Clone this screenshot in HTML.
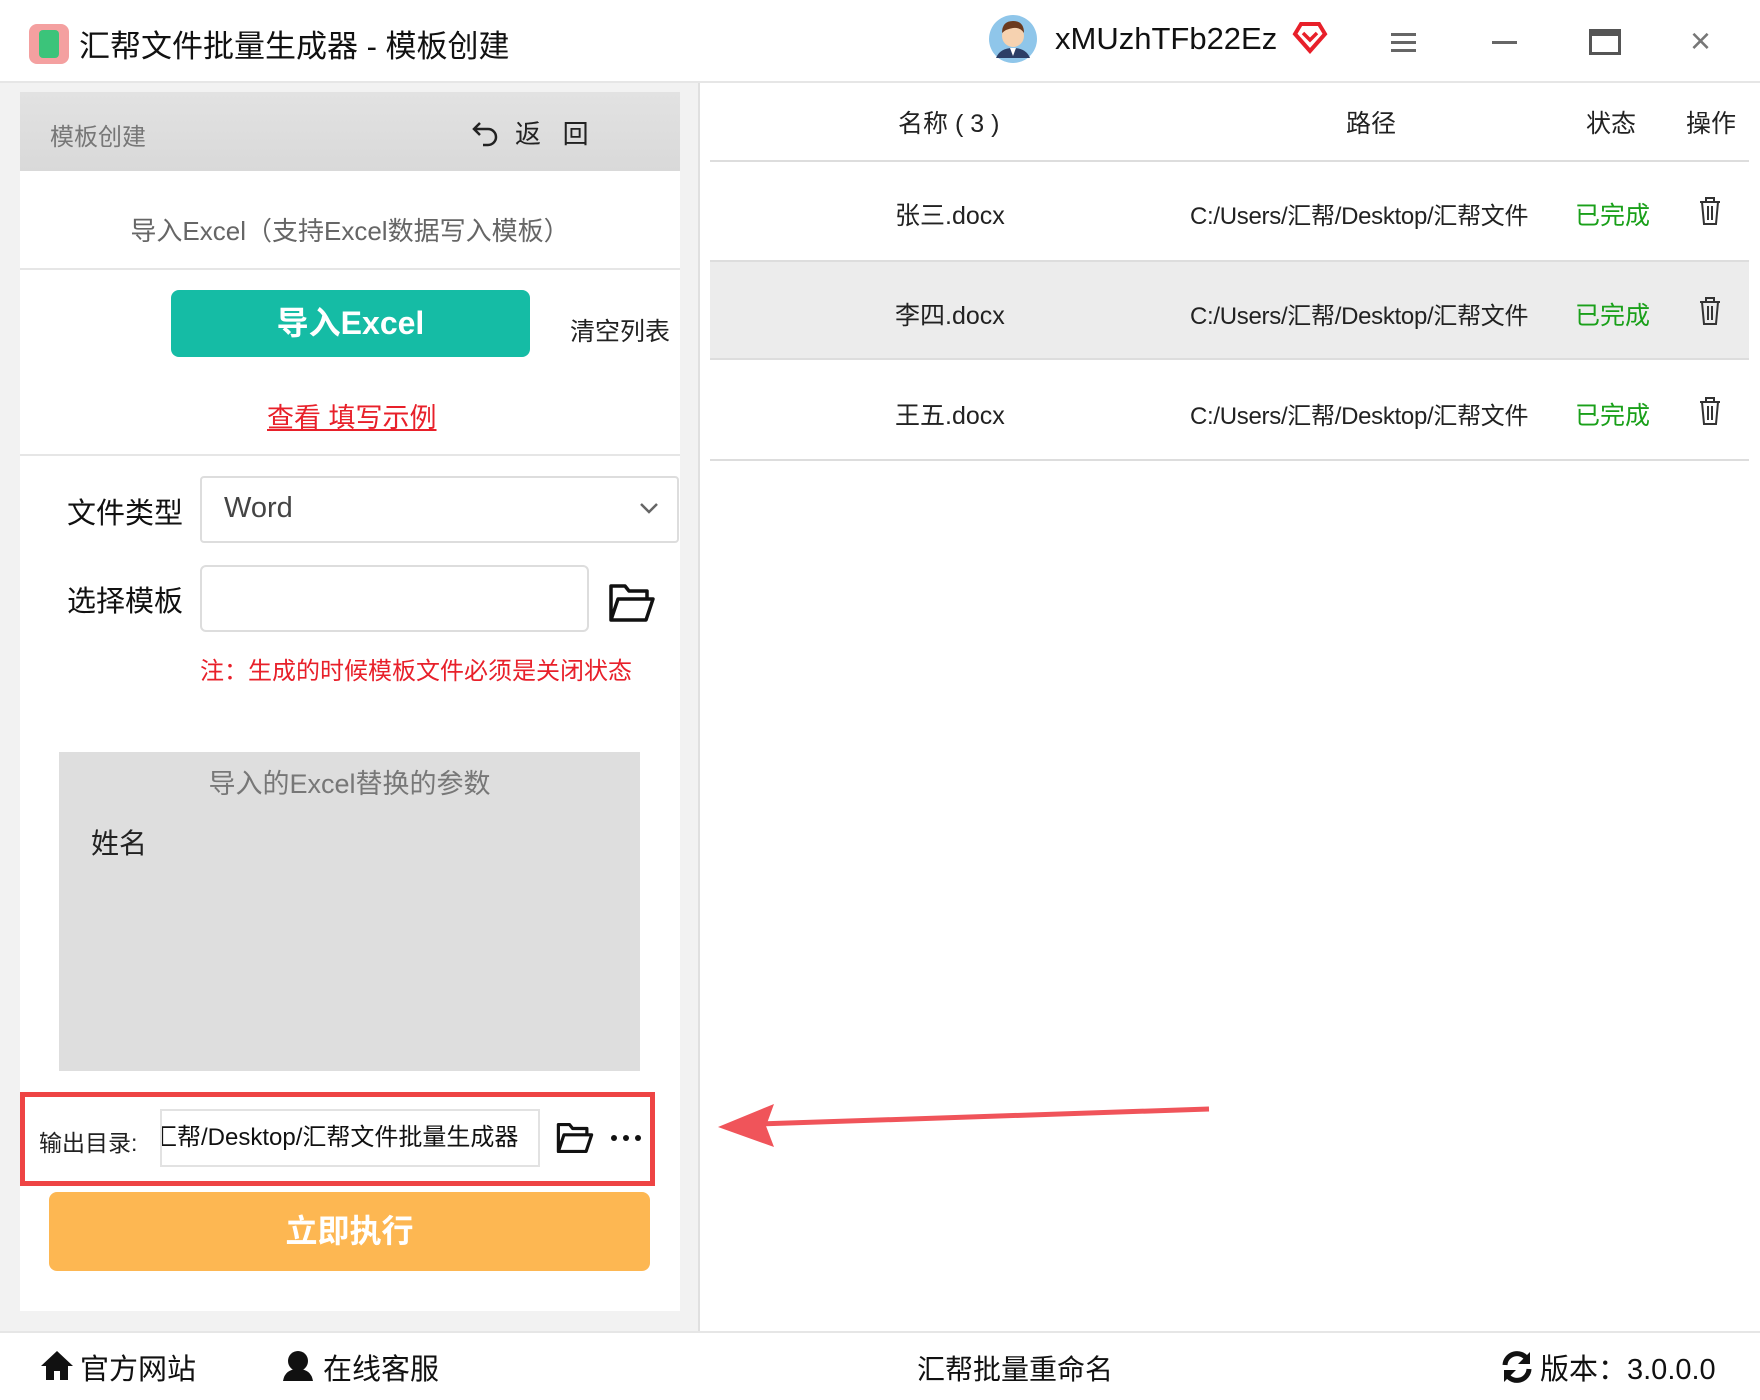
<!DOCTYPE html>
<html><head><meta charset="utf-8"><style>
*{margin:0;padding:0;box-sizing:border-box}
body{width:1760px;height:1400px;background:#fff;font-family:"Liberation Sans","Noto Sans CJK SC",sans-serif;position:relative;overflow:hidden;color:#222}
.a{position:absolute;white-space:nowrap}
</style></head><body>
<div class="a" style="left:29px;top:24px;width:40px;height:40px;background:#f4a0a0;border-radius:8px"></div>
<div class="a" style="left:39px;top:30px;width:20px;height:28px;background:#3bc47a;border-radius:4px"></div>
<div class="a" style="left:79px;top:21px;font-size:31px;color:#111">汇帮文件批量生成器 - 模板创建</div>
<svg class="a" style="left:988px;top:14px" width="50" height="50" viewBox="0 0 50 50"><circle cx="25" cy="25" r="24" fill="#8fc6ea"/><circle cx="25" cy="22" r="11" fill="#f6d2b0"/><path d="M14 19q0-12 11-12t11 12q-4-6-11-5t-11 5z" fill="#6b3a1e"/><path d="M8 44q4-10 17-10t17 10z" fill="#2c3e66"/><path d="M22 34l3 8 3-8z" fill="#fff"/></svg>
<div class="a" style="left:1055px;top:21px;font-size:31px;color:#111">xMUzhTFb22Ez</div>
<svg class="a" style="left:1292px;top:20px" width="36" height="34" viewBox="0 0 36 34"><path d="M18 31L3 14 9 4h18l6 10z" fill="none" stroke="#e8202a" stroke-width="4"/><path d="M11 13l7 7 7-7" fill="none" stroke="#e8202a" stroke-width="3.5"/></svg>
<div class="a" style="left:1391px;top:33px;width:25px;height:3px;background:#666;box-shadow:0 8px 0 #666,0 16px 0 #666"></div>
<div class="a" style="left:1492px;top:41px;width:25px;height:3px;background:#666"></div>
<div class="a" style="left:1589px;top:29px;width:32px;height:26px;border:3px solid #555;border-top-width:7px"></div>
<div class="a" style="left:1690px;top:20px;font-size:36px;color:#777">×</div>
<div class="a" style="left:0;top:81px;width:1760px;height:2px;background:#e6e6e6"></div>
<div class="a" style="left:0;top:83px;width:699px;height:1249px;background:#f2f2f2"></div>
<div class="a" style="left:698px;top:83px;width:2px;height:1249px;background:#e0e0e0"></div>
<div class="a" style="left:20px;top:92px;width:660px;height:1219px;background:#fff"></div>
<div class="a" style="left:20px;top:92px;width:660px;height:79px;background:linear-gradient(#e2e2e2,#d9d9d9)"></div>
<div class="a" style="left:50px;top:117px;font-size:24px;color:#777">模板创建</div>
<svg class="a" style="left:471px;top:119px" width="30" height="28" viewBox="0 0 30 28"><path d="M9 4L3 10l6 6M3 10h14a8 8 0 010 16h-5" fill="none" stroke="#222" stroke-width="2.5"/></svg>
<div class="a" style="left:515px;top:114px;font-size:26px;color:#222">返&nbsp;&nbsp;&nbsp;回</div>
<div class="a" style="left:20px;top:211px;width:660px;text-align:center;font-size:26px;color:#666">导入Excel（支持Excel数据写入模板）</div>
<div class="a" style="left:20px;top:268px;width:660px;height:2px;background:#e6e6e6"></div>
<div class="a" style="left:171px;top:290px;width:359px;height:67px;background:#15bca5;border-radius:8px;color:#fff;font-size:32px;font-weight:bold;text-align:center;line-height:67px">导入Excel</div>
<div class="a" style="left:570px;top:312px;font-size:25px;color:#222">清空列表</div>
<div class="a" style="left:267px;top:396px;font-size:27px;color:#e8202a;text-decoration:underline">查看 填写示例</div>
<div class="a" style="left:20px;top:454px;width:660px;height:2px;background:#e6e6e6"></div>
<div class="a" style="left:67px;top:490px;font-size:29px;color:#111">文件类型</div>
<div class="a" style="left:200px;top:476px;width:479px;height:67px;border:2px solid #ddd;border-radius:4px"></div>
<div class="a" style="left:224px;top:492px;font-size:29px;color:#444">Word</div>
<svg class="a" style="left:638px;top:500px" width="22" height="16"><path d="M3 4l8 8 8-8" fill="none" stroke="#666" stroke-width="2.5"/></svg>
<div class="a" style="left:67px;top:578px;font-size:29px;color:#111">选择模板</div>
<div class="a" style="left:200px;top:565px;width:389px;height:67px;border:2px solid #ddd;border-radius:6px"></div>
<svg class="a" style="left:608px;top:582px" width="48" height="42" viewBox="0 0 48 42"><path d="M3 38V4h14l4 5h18v8M3 38l7-21h35l-7 21z" fill="none" stroke="#111" stroke-width="3.5" stroke-linejoin="round"/></svg>
<div class="a" style="left:200px;top:651px;font-size:24px;color:#e8202a">注：生成的时候模板文件必须是关闭状态</div>
<div class="a" style="left:59px;top:752px;width:581px;height:319px;background:#dedede"></div>
<div class="a" style="left:59px;top:762px;width:581px;text-align:center;font-size:27px;color:#777">导入的Excel替换的参数</div>
<div class="a" style="left:91px;top:822px;font-size:28px;color:#222">姓名</div>
<div class="a" style="left:20px;top:1092px;width:635px;height:94px;border:5px solid #ee4444"></div>
<div class="a" style="left:39px;top:1124px;font-size:23px;color:#222">输出目录:</div>
<div class="a" style="left:160px;top:1109px;width:380px;height:58px;border:2px solid #e2e2e2;overflow:hidden"><div class="a" style="left:-9px;top:0;font-size:24px;line-height:54px;color:#111">汇帮/Desktop/汇帮文件批量生成器</div></div>
<svg class="a" style="left:556px;top:1121px" width="38" height="34" viewBox="0 0 48 42"><path d="M3 38V4h14l4 5h18v8M3 38l7-21h35l-7 21z" fill="none" stroke="#111" stroke-width="4" stroke-linejoin="round"/></svg>
<div class="a" style="left:611px;top:1135px;width:6px;height:6px;background:#111;border-radius:50%;box-shadow:12px 0 0 #111,24px 0 0 #111"></div>
<div class="a" style="left:49px;top:1192px;width:601px;height:79px;background:#fdb752;border-radius:8px;color:#fff;font-size:32px;font-weight:bold;text-align:center;line-height:79px">立即执行</div>
<div class="a" style="left:898px;top:104px;font-size:25px;color:#222">名称 ( 3 )</div>
<div class="a" style="left:1346px;top:104px;font-size:25px;color:#222">路径</div>
<div class="a" style="left:1586px;top:104px;font-size:25px;color:#222">状态</div>
<div class="a" style="left:1686px;top:104px;font-size:25px;color:#222">操作</div>
<div class="a" style="left:710px;top:160px;width:1039px;height:2px;background:#ddd"></div>
<div class="a" style="left:710px;top:260px;width:1039px;height:100px;background:#ececec;border-top:2px solid #ddd;border-bottom:2px solid #ddd"></div>
<div class="a" style="left:710px;top:459px;width:1039px;height:2px;background:#ddd"></div>
<div class="a" style="left:895px;top:196px;font-size:25px">张三.docx</div>
<div class="a" style="left:895px;top:296px;font-size:25px">李四.docx</div>
<div class="a" style="left:895px;top:396px;font-size:25px">王五.docx</div>
<div class="a" style="left:1190px;top:196px;font-size:24px;letter-spacing:-0.3px">C:/Users/汇帮/Desktop/汇帮文件</div>
<div class="a" style="left:1190px;top:296px;font-size:24px;letter-spacing:-0.3px">C:/Users/汇帮/Desktop/汇帮文件</div>
<div class="a" style="left:1190px;top:396px;font-size:24px;letter-spacing:-0.3px">C:/Users/汇帮/Desktop/汇帮文件</div>
<div class="a" style="left:1575px;top:196px;font-size:25px;color:#1aa01a">已完成</div>
<div class="a" style="left:1575px;top:296px;font-size:25px;color:#1aa01a">已完成</div>
<div class="a" style="left:1575px;top:396px;font-size:25px;color:#1aa01a">已完成</div>
<svg class="a" style="left:1698px;top:196px" width="24" height="30" viewBox="0 0 24 30"><path d="M2 6h20M8 6V2h8v4M4 6l2 22h12l2-22M10 10v14M14 10v14" fill="none" stroke="#333" stroke-width="2"/></svg>
<svg class="a" style="left:1698px;top:296px" width="24" height="30" viewBox="0 0 24 30"><path d="M2 6h20M8 6V2h8v4M4 6l2 22h12l2-22M10 10v14M14 10v14" fill="none" stroke="#333" stroke-width="2"/></svg>
<svg class="a" style="left:1698px;top:396px" width="24" height="30" viewBox="0 0 24 30"><path d="M2 6h20M8 6V2h8v4M4 6l2 22h12l2-22M10 10v14M14 10v14" fill="none" stroke="#333" stroke-width="2"/></svg>
<svg class="a" style="left:700px;top:1090px" width="520" height="60"><path d="M509 19L60 34" stroke="#f0545a" stroke-width="5"/><path d="M18 37L74 14 66 36 74 57z" fill="#f0545a"/></svg>
<div class="a" style="left:0;top:1331px;width:1760px;height:2px;background:#e6e6e6"></div>
<svg class="a" style="left:40px;top:1349px" width="34" height="32" viewBox="0 0 34 32"><path d="M17 2L1 17h5v14h8v-9h6v9h8V17h5z" fill="#111"/></svg>
<div class="a" style="left:80px;top:1346px;font-size:29px;color:#111">官方网站</div>
<svg class="a" style="left:281px;top:1349px" width="34" height="32" viewBox="0 0 34 32"><circle cx="17" cy="12" r="10" fill="#111"/><path d="M2 32q2-12 15-12t15 12z" fill="#111"/></svg>
<div class="a" style="left:323px;top:1346px;font-size:29px;color:#111">在线客服</div>
<div class="a" style="left:917px;top:1348px;font-size:28px;color:#111">汇帮批量重命名</div>
<svg class="a" style="left:1500px;top:1350px" width="34" height="34" viewBox="0 0 34 34"><path d="M5 15A12 12 0 0127 9M29 19A12 12 0 017 25" fill="none" stroke="#111" stroke-width="5"/><path d="M30 2v12H18z M4 32V20h12z" fill="#111"/></svg>
<div class="a" style="left:1540px;top:1346px;font-size:29px;color:#111">版本：3.0.0.0</div>
</body></html>
